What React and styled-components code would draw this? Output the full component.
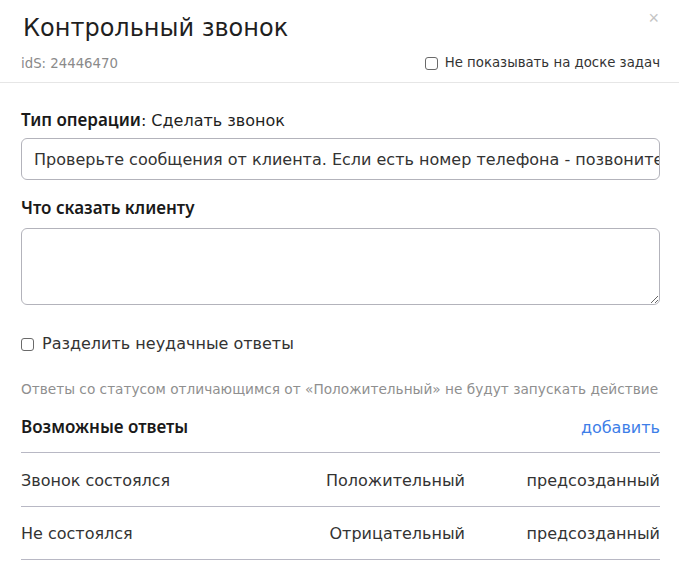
import React from "react";
import styled, { createGlobalStyle } from "styled-components";

const Global = createGlobalStyle`
    body {
        margin: 0;
        background: #fff;
        font-family: "DejaVu Sans", "Noto Sans", sans-serif;
        color: #222;
    }
`;

const Modal = styled.div`
    width: 679px;
    background: #fff;
`;

const Header = styled.div`
    position: relative;
    padding: 11px 19px 0 21px;
    border-bottom: 1px solid #e6e6e6;
`;

const Title = styled.h1`
    margin: 0;
    padding-left: 2px;
    font-size: 24px;
    font-weight: 400;
    line-height: 34px;
    color: #1f1f1f;
`;

const Close = styled.button`
    position: absolute;
    top: 8px;
    right: 20px;
    border: none;
    background: none;
    padding: 0;
    font-size: 18px;
    line-height: 20px;
    color: #c4c4c4;
    cursor: pointer;
`;

const MetaRow = styled.div`
    display: flex;
    justify-content: space-between;
    align-items: center;
    height: 36px;
    padding-bottom: 1px;
    font-size: 13.3px;
`;

const Id = styled.span`
    color: #8a8a8a;
`;

const CheckLabel = styled.label`
    display: flex;
    align-items: center;
    gap: ${(p) => p.$gap || 7}px;
    font-size: ${(p) => p.$size || 13.3}px;
    line-height: 20px;
    color: #333;
    cursor: pointer;
`;

const Box = styled.span`
    width: 11px;
    height: 11px;
    border: 1.5px solid #6a6a6a;
    border-radius: 3px;
    flex-shrink: 0;
`;

const Body = styled.div`
    padding: 26px 19px 0 21px;
`;

const Label = styled.div`
    display: flex;
    align-items: baseline;
    height: 22px;
    font-size: 16px;
    line-height: 22px;
    color: #1f1f1f;
    margin-bottom: ${(p) => p.$mb || 8}px;
`;

const Strong = styled.b`
    font-family: "Noto Sans", sans-serif;
    font-size: 17px;
    line-height: 22px;
    font-weight: 600;
    color: #1a1a1a;
`;

const Field = styled.div`
    height: 40px;
    border: 1px solid #b3b3bb;
    border-radius: 6px;
    padding: 0 12px;
    display: flex;
    align-items: center;
    font-size: 16px;
    color: #333;
    white-space: nowrap;
    overflow: hidden;
    margin-bottom: 17px;
`;

const Area = styled.textarea`
    display: block;
    box-sizing: border-box;
    width: 100%;
    height: 77px;
    border: 1px solid #b3b3bb;
    border-radius: 6px;
    font-family: inherit;
    font-size: 16px;
    padding: 8px 12px;
    resize: vertical;
    margin: 0 0 29px;
    outline: none;
`;

const Hint = styled.p`
    margin: 26px 0 16px;
    font-size: 13.7px;
    line-height: 18px;
    white-space: nowrap;
    color: #8f8f8f;
`;

const ListHead = styled.div`
    display: flex;
    justify-content: space-between;
    align-items: center;
    height: 26px;
    padding-bottom: 12px;
    border-bottom: 1px solid #b8b8c4;
    font-size: 16px;
`;

const Add = styled.a`
    color: #3d7ee8;
    cursor: pointer;
`;

const Row = styled.div`
    display: grid;
    grid-template-columns: 1fr 180px 195px;
    align-items: center;
    box-sizing: border-box;
    height: 53.5px;
    padding-top: 2px;
    border-bottom: 1px solid #b8b8c4;
    font-size: 16px;
    color: #333;
`;

const Cell = styled.span`
    text-align: ${(p) => p.$align || "left"};
`;

const answers = [
    { name: "Звонок состоялся", status: "Положительный", kind: "предсозданный" },
    { name: "Не состоялся", status: "Отрицательный", kind: "предсозданный" },
];

export default function App() {
    return (
        <Modal>
            <Global />
            <Header>
                <Title>Контрольный звонок</Title>
                <Close aria-label="close">×</Close>
                <MetaRow>
                    <Id>idS: 24446470</Id>
                    <CheckLabel>
                        <Box />
                        Не показывать на доске задач
                    </CheckLabel>
                </MetaRow>
            </Header>
            <Body>
                <Label $mb={7}>
                    <Strong>Тип операции</Strong>: Сделать звонок
                </Label>
                <Field>
                    Проверьте сообщения от клиента. Если есть номер телефона - позвоните клиенту
                </Field>
                <Label $mb={9}>
                    <Strong>Что сказать клиенту</Strong>
                </Label>
                <Area />
                <CheckLabel $size={16} $gap={8}>
                    <Box />
                    Разделить неудачные ответы
                </CheckLabel>
                <Hint>
                    Ответы со статусом отличающимся от «Положительный» не будут запускать действие
                </Hint>
                <ListHead>
                    <Strong>Возможные ответы</Strong>
                    <Add>добавить</Add>
                </ListHead>
                {answers.map((a) => (
                    <Row key={a.name}>
                        <Cell>{a.name}</Cell>
                        <Cell $align="right">{a.status}</Cell>
                        <Cell $align="right">{a.kind}</Cell>
                    </Row>
                ))}
            </Body>
        </Modal>
    );
}
